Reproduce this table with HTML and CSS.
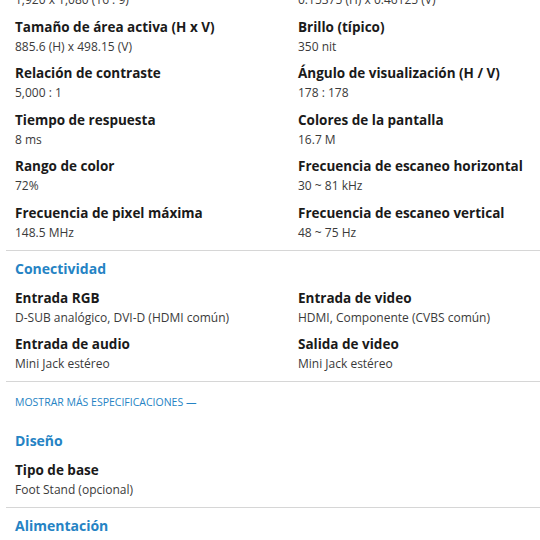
FILE: index.html
```html
<!DOCTYPE html>
<html lang="es">
<head>
    <meta charset="UTF-8">
    <meta name="viewport" content="width=device-width, initial-scale=1.0">
    <title>Especificaciones</title>
    <link rel="stylesheet" href="styles.css">
</head>
<body>
    <main class="specs">
        <section class="spec-group first">
            <div class="spec-grid">
                <div class="spec-item">
                    <h3>Resolución</h3>
                    <p>1,920 x 1,080 (16 : 9)</p>
                </div>
                <div class="spec-item">
                    <h3>Tamaño de píxel (H x V)</h3>
                    <p>0.15375 (H) x 0.46125 (V)</p>
                </div>
                <div class="spec-item">
                    <h3>Tamaño de área activa (H x V)</h3>
                    <p>885.6 (H) x 498.15 (V)</p>
                </div>
                <div class="spec-item">
                    <h3>Brillo (típico)</h3>
                    <p>350 nit</p>
                </div>
                <div class="spec-item">
                    <h3>Relación de contraste</h3>
                    <p>5,000 : 1</p>
                </div>
                <div class="spec-item">
                    <h3>Ángulo de visualización (H / V)</h3>
                    <p>178 : 178</p>
                </div>
                <div class="spec-item">
                    <h3>Tiempo de respuesta</h3>
                    <p>8 ms</p>
                </div>
                <div class="spec-item">
                    <h3>Colores de la pantalla</h3>
                    <p>16.7 M</p>
                </div>
                <div class="spec-item">
                    <h3>Rango de color</h3>
                    <p>72%</p>
                </div>
                <div class="spec-item">
                    <h3>Frecuencia de escaneo horizontal</h3>
                    <p>30 ~ 81 kHz</p>
                </div>
                <div class="spec-item">
                    <h3>Frecuencia de pixel máxima</h3>
                    <p>148.5 MHz</p>
                </div>
                <div class="spec-item">
                    <h3>Frecuencia de escaneo vertical</h3>
                    <p>48 ~ 75 Hz</p>
                </div>
            </div>
        </section>

        <section class="spec-group">
            <h2>Conectividad</h2>
            <div class="spec-grid">
                <div class="spec-item">
                    <h3>Entrada RGB</h3>
                    <p>D-SUB analógico, DVI-D (HDMI común)</p>
                </div>
                <div class="spec-item">
                    <h3>Entrada de video</h3>
                    <p>HDMI, Componente (CVBS común)</p>
                </div>
                <div class="spec-item">
                    <h3>Entrada de audio</h3>
                    <p>Mini Jack estéreo</p>
                </div>
                <div class="spec-item">
                    <h3>Salida de video</h3>
                    <p>Mini Jack estéreo</p>
                </div>
            </div>
        </section>

        <a href="#" class="more-link">MOSTRAR MÁS ESPECIFICACIONES —</a>

        <section class="spec-group no-top">
            <h2>Diseño</h2>
            <div class="spec-grid">
                <div class="spec-item">
                    <h3>Tipo de base</h3>
                    <p>Foot Stand (opcional)</p>
                </div>
            </div>
        </section>

        <section class="spec-group last">
            <h2>Alimentación</h2>
        </section>
    </main>
</body>
</html>
```

FILE: styles.css
```css
body {
    font-family: "Open Sans", "Noto Sans", Arial, sans-serif;
    background-color: #fff;
    color: #1a1a1a;
    margin: 0;
    overflow: hidden;
}

.specs {
    margin-left: 6px;
}

.spec-group {
    padding: 8.5px 0 8px 9px;
    border-bottom: 1px solid #d6d6d6;
}

.spec-group.first {
    margin-top: -29px;
    padding-top: 0;
}

.spec-group.no-top {
    padding-top: 0;
}

.spec-group.last {
    border-bottom: none;
}

.spec-group h2 {
    margin: 0 0 9.5px;
    font-size: 14px;
    line-height: 20px;
    font-weight: 700;
    color: #2583c4;
}

.spec-grid {
    display: grid;
    grid-template-columns: 283px 1fr;
    row-gap: 8.5px;
}

.spec-item h3 {
    margin: 0;
    font-size: 13.5px;
    line-height: 19px;
    font-weight: 700;
    color: #1a1a1a;
    white-space: nowrap;
}

.spec-item p {
    margin: 0;
    font-size: 12px;
    line-height: 19px;
    color: #3a3a3a;
    white-space: nowrap;
}

.more-link {
    display: block;
    margin: 13px 0 22px 9px;
    font-size: 10.5px;
    line-height: 14px;
    color: #2583c4;
    text-decoration: none;
}
```
